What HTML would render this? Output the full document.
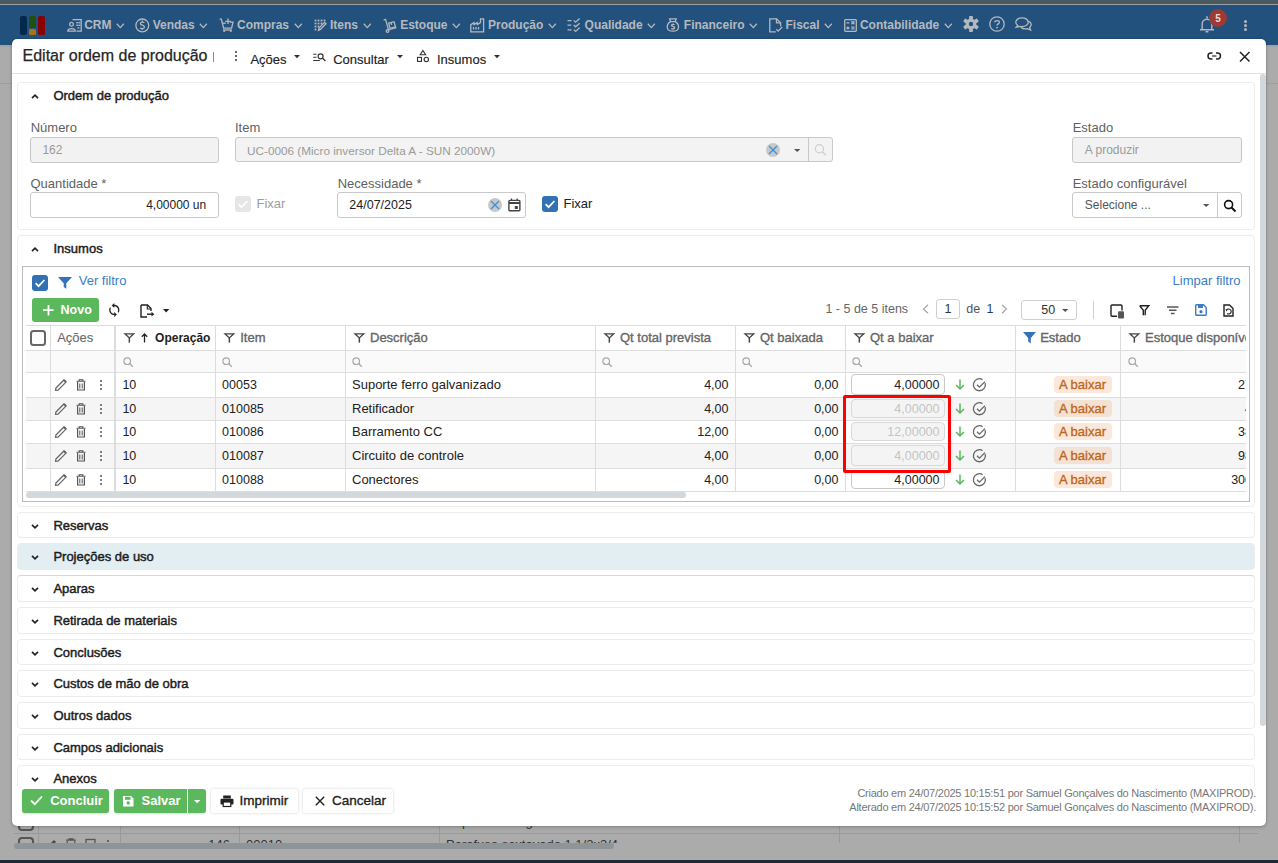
<!DOCTYPE html>
<html><head><meta charset="utf-8"><style>
html,body{margin:0;padding:0;width:1278px;height:863px;overflow:hidden;position:relative;font-family:"Liberation Sans", sans-serif;}
.t{position:absolute;white-space:nowrap;}
svg{overflow:visible}
</style></head><body>
<div style="position:absolute;left:0px;top:0px;width:1278px;height:4px;box-sizing:border-box;background:#4a5860"></div><div style="position:absolute;left:0px;top:4px;width:1278px;height:1px;box-sizing:border-box;background:#9aa1a6"></div><div style="position:absolute;left:0px;top:5px;width:1278px;height:40px;box-sizing:border-box;background:#23517e"></div><div style="position:absolute;left:0px;top:45px;width:1278px;height:815px;box-sizing:border-box;background:#ababab"></div><div style="position:absolute;left:0px;top:45px;width:1278px;height:2px;box-sizing:border-box;background:#a2a2a2"></div><div style="position:absolute;left:0px;top:83px;width:1278px;height:1px;box-sizing:border-box;background:#9e9e9e"></div><div style="position:absolute;left:0px;top:860px;width:1278px;height:3px;box-sizing:border-box;background:#1e2a36"></div><div style="position:absolute;left:20px;top:16px;width:7px;height:19px;box-sizing:border-box;background:#032a4d;border-radius:2px"></div><div style="position:absolute;left:29px;top:16px;width:7px;height:12px;box-sizing:border-box;background:#1f5010;border-radius:2px"></div><div style="position:absolute;left:29px;top:29px;width:7px;height:6px;box-sizing:border-box;background:#a87514;border-radius:1.5px"></div><div style="position:absolute;left:37.5px;top:16px;width:7.5px;height:19px;box-sizing:border-box;background:#8a0000;border-radius:2px"></div><div class="t" style="left:84.2px;top:19.00px;font-size:12px;line-height:12px;color:#b4b9be;font-weight:700;">CRM</div><svg style="position:absolute;left:116.04375px;top:22.5px;" width="9" height="6" viewBox="0 0 9 6"><path d="M0.8 0.8 L4.3 4.6 L7.8 0.8" fill="none" stroke="#b4b9be" stroke-width="1.3"/></svg><div class="t" style="left:152.7px;top:19.00px;font-size:12px;line-height:12px;color:#b4b9be;font-weight:700;">Vendas</div><svg style="position:absolute;left:199.215625px;top:22.5px;" width="9" height="6" viewBox="0 0 9 6"><path d="M0.8 0.8 L4.3 4.6 L7.8 0.8" fill="none" stroke="#b4b9be" stroke-width="1.3"/></svg><div class="t" style="left:237px;top:19.00px;font-size:12px;line-height:12px;color:#b4b9be;font-weight:700;">Compras</div><svg style="position:absolute;left:293.515625px;top:22.5px;" width="9" height="6" viewBox="0 0 9 6"><path d="M0.8 0.8 L4.3 4.6 L7.8 0.8" fill="none" stroke="#b4b9be" stroke-width="1.3"/></svg><div class="t" style="left:330px;top:19.00px;font-size:12px;line-height:12px;color:#b4b9be;font-weight:700;">Itens</div><svg style="position:absolute;left:362.5px;top:22.5px;" width="9" height="6" viewBox="0 0 9 6"><path d="M0.8 0.8 L4.3 4.6 L7.8 0.8" fill="none" stroke="#b4b9be" stroke-width="1.3"/></svg><div class="t" style="left:400.2px;top:19.00px;font-size:12px;line-height:12px;color:#b4b9be;font-weight:700;">Estoque</div><svg style="position:absolute;left:452.028125px;top:22.5px;" width="9" height="6" viewBox="0 0 9 6"><path d="M0.8 0.8 L4.3 4.6 L7.8 0.8" fill="none" stroke="#b4b9be" stroke-width="1.3"/></svg><div class="t" style="left:488px;top:19.00px;font-size:12px;line-height:12px;color:#b4b9be;font-weight:700;">Produção</div><svg style="position:absolute;left:547.828125px;top:22.5px;" width="9" height="6" viewBox="0 0 9 6"><path d="M0.8 0.8 L4.3 4.6 L7.8 0.8" fill="none" stroke="#b4b9be" stroke-width="1.3"/></svg><div class="t" style="left:584.6px;top:19.00px;font-size:12px;line-height:12px;color:#b4b9be;font-weight:700;">Qualidade</div><svg style="position:absolute;left:647.084375px;top:22.5px;" width="9" height="6" viewBox="0 0 9 6"><path d="M0.8 0.8 L4.3 4.6 L7.8 0.8" fill="none" stroke="#b4b9be" stroke-width="1.3"/></svg><div class="t" style="left:683.8px;top:19.00px;font-size:12px;line-height:12px;color:#b4b9be;font-weight:700;">Financeiro</div><svg style="position:absolute;left:748.95625px;top:22.5px;" width="9" height="6" viewBox="0 0 9 6"><path d="M0.8 0.8 L4.3 4.6 L7.8 0.8" fill="none" stroke="#b4b9be" stroke-width="1.3"/></svg><div class="t" style="left:785.5px;top:19.00px;font-size:12px;line-height:12px;color:#b4b9be;font-weight:700;">Fiscal</div><svg style="position:absolute;left:824.0px;top:22.5px;" width="9" height="6" viewBox="0 0 9 6"><path d="M0.8 0.8 L4.3 4.6 L7.8 0.8" fill="none" stroke="#b4b9be" stroke-width="1.3"/></svg><div class="t" style="left:859.9px;top:19.00px;font-size:12px;line-height:12px;color:#b4b9be;font-weight:700;">Contabilidade</div><svg style="position:absolute;left:943.7125px;top:22.5px;" width="9" height="6" viewBox="0 0 9 6"><path d="M0.8 0.8 L4.3 4.6 L7.8 0.8" fill="none" stroke="#b4b9be" stroke-width="1.3"/></svg><svg style="position:absolute;left:66.5px;top:18.5px;" width="15" height="13" viewBox="0 0 15 13"><circle cx="4.5" cy="5.3" r="1.9" fill="none" stroke="#b4b9be" stroke-width="1.3"/><path d="M0.8 12.2 a3.7 2.6 0 0 1 7.4 0 z" fill="none" stroke="#b4b9be" stroke-width="1.3"/><path d="M5.5 0.7 H14.2 V12.2 H9.5" fill="none" stroke="#b4b9be" stroke-width="1.3"/><rect x="9.3" y="3" width="1.8" height="1.4" fill="#b4b9be"/><rect x="11.5" y="3" width="1.8" height="1.4" fill="#b4b9be"/><rect x="9.3" y="5.6" width="1.8" height="1.4" fill="#b4b9be"/><rect x="11.5" y="5.6" width="1.8" height="1.4" fill="#b4b9be"/><rect x="10.5" y="8.2" width="1.8" height="1.4" fill="#b4b9be"/></svg><svg style="position:absolute;left:134.5px;top:17.5px;" width="15" height="15" viewBox="0 0 15 15"><circle cx="7.3" cy="7.4" r="6.4" fill="none" stroke="#b4b9be" stroke-width="1.3"/><path d="M9.3 4.8 C8.8 3.8 5.3 3.6 5.4 5.6 C5.5 7.4 9.4 6.8 9.4 9 C9.4 11 5.8 11 5.2 9.8 M7.3 2.6 V3.8 M7.3 10.8 V12" fill="none" stroke="#b4b9be" stroke-width="1.3" stroke-width="1.1"/></svg><svg style="position:absolute;left:219px;top:17.5px;" width="15" height="15" viewBox="0 0 15 15"><path d="M0.6 1.2 H2.3 L4.6 10.2 H12.6 L14 4.2 H10.8" fill="none" stroke="#b4b9be" stroke-width="1.3"/><path d="M3.3 5.2 H6.8" fill="none" stroke="#b4b9be" stroke-width="1.3"/><path d="M9 0.6 V6 M6.3 3.3 H11.7" fill="none" stroke="#b4b9be" stroke-width="1.3"/><circle cx="5.2" cy="13" r="1" fill="#b4b9be"/><circle cx="11.8" cy="13" r="1" fill="#b4b9be"/><path d="M4 12 H13" fill="none" stroke="#b4b9be" stroke-width="1.3" stroke-width="0.9"/></svg><svg style="position:absolute;left:314px;top:19px;" width="13" height="13" viewBox="0 0 13 13"><rect x="0.6" y="0.6" width="1.8" height="1.8" fill="#b4b9be"/><rect x="3.6" y="0.6" width="1.8" height="1.8" fill="#b4b9be"/><rect x="6.6" y="0.6" width="1.8" height="1.8" fill="#b4b9be"/><rect x="9.6" y="0.6" width="1.8" height="1.8" fill="#b4b9be"/><rect x="0.6" y="3.6" width="1.8" height="1.8" fill="#b4b9be"/><rect x="3.6" y="3.6" width="1.8" height="1.8" fill="#b4b9be"/><rect x="6.6" y="3.6" width="1.8" height="1.8" fill="#b4b9be"/><rect x="0.6" y="6.6" width="1.8" height="1.8" fill="#b4b9be"/><rect x="3.6" y="6.6" width="1.8" height="1.8" fill="#b4b9be"/><rect x="0.6" y="9.6" width="1.8" height="1.8" fill="#b4b9be"/><path d="M4.5 11.3 L5 9 L10.6 3.4 L12 4.8 L6.4 10.4 z" fill="none" stroke="#b4b9be" stroke-width="1.3" stroke-width="1.1"/></svg><svg style="position:absolute;left:383px;top:18.5px;" width="14" height="14" viewBox="0 0 14 14"><path d="M0.6 0.8 L2.6 0.4 L5.5 10.8 L13.4 8.6" fill="none" stroke="#b4b9be" stroke-width="1.3"/><circle cx="4.5" cy="12" r="1.3" fill="none" stroke="#b4b9be" stroke-width="1.3"/><path d="M5.6 4.2 L11 2.7 L12.5 7.8 L7 9.3 z" fill="none" stroke="#b4b9be" stroke-width="1.3" stroke-width="1.1"/><path d="M8 3.5 L8.6 5.8" fill="none" stroke="#b4b9be" stroke-width="1.3" stroke-width="1"/></svg><svg style="position:absolute;left:469.5px;top:17.5px;" width="15" height="15" viewBox="0 0 15 15"><path d="M0.8 13.8 V6.6 L4 4.6 V6.6 L7.3 4.6 V6.6 L10.5 4.6 V0.8 H13.6 V13.8 z" fill="none" stroke="#b4b9be" stroke-width="1.3" stroke-width="1.4"/><path d="M3.5 9 V11.5 M6 9 V11.5 M8.5 9 V11.5" fill="none" stroke="#b4b9be" stroke-width="1.3" stroke-width="1.2"/></svg><svg style="position:absolute;left:566.5px;top:18.5px;" width="15" height="13" viewBox="0 0 15 13"><path d="M0.5 1.6 H4.5 M0.5 6.2 H4.3 M0.5 10.8 H4.5" fill="none" stroke="#b4b9be" stroke-width="1.3"/><path d="M6.8 1.4 L8.6 3.2 L12.6 -0.4 M6.8 6 L8.6 7.8 L12.6 4.2 M6.8 10.6 L8.6 12.4 L12.6 8.8" fill="none" stroke="#b4b9be" stroke-width="1.3"/></svg><svg style="position:absolute;left:666px;top:18px;" width="14" height="14" viewBox="0 0 14 14"><path d="M4.6 3.6 C0 6.4 -0.4 13.2 6.9 13.2 C14.2 13.2 13.8 6.4 9.2 3.6 z" fill="none" stroke="#b4b9be" stroke-width="1.3"/><path d="M4.6 3.6 L3.6 0.8 H10.2 L9.2 3.6" fill="none" stroke="#b4b9be" stroke-width="1.3"/><path d="M8.6 6.8 C8.2 6.1 5.4 6 5.5 7.4 C5.6 8.6 8.7 8.3 8.7 9.8 C8.7 11.2 5.8 11.1 5.3 10.3 M7 5.6 V6.2 M7 11.1 V11.8" fill="none" stroke="#b4b9be" stroke-width="1.3" stroke-width="1"/></svg><svg style="position:absolute;left:769px;top:17.5px;" width="14" height="15" viewBox="0 0 14 15"><path d="M6.8 13.8 H0.8 V0.8 H7.6 L11.6 4.8 V8.2" fill="none" stroke="#b4b9be" stroke-width="1.3" stroke-width="1.4"/><path d="M7.5 0.8 V4.8 H11.6" fill="none" stroke="#b4b9be" stroke-width="1.3" stroke-width="1"/><path d="M7.3 11.3 L9.1 13.1 L13.2 9" fill="none" stroke="#b4b9be" stroke-width="1.3" stroke-width="1.2"/></svg><svg style="position:absolute;left:843.5px;top:18.5px;" width="13" height="13" viewBox="0 0 13 13"><rect x="0.7" y="0.7" width="11.6" height="11.6" rx="0.8" fill="none" stroke="#b4b9be" stroke-width="1.3" stroke-width="1.3"/><path d="M2.4 3.8 H5.4 M7.4 2.2 L10.4 5.2 M10.4 2.2 L7.4 5.2 M2.3 9 H5.5 M3.9 7.4 V10.6 M7.3 8.2 H10.5 M7.3 9.9 H10.5" fill="none" stroke="#b4b9be" stroke-width="1.3" stroke-width="1.2"/></svg><svg style="position:absolute;left:963px;top:16px;" width="16" height="16" viewBox="0 0 16 16"><rect x="-1.9" y="-8" width="3.8" height="4" rx="0.8" fill="#b4b9be" transform="translate(8 8) rotate(0)"/><rect x="-1.9" y="-8" width="3.8" height="4" rx="0.8" fill="#b4b9be" transform="translate(8 8) rotate(60)"/><rect x="-1.9" y="-8" width="3.8" height="4" rx="0.8" fill="#b4b9be" transform="translate(8 8) rotate(120)"/><rect x="-1.9" y="-8" width="3.8" height="4" rx="0.8" fill="#b4b9be" transform="translate(8 8) rotate(180)"/><rect x="-1.9" y="-8" width="3.8" height="4" rx="0.8" fill="#b4b9be" transform="translate(8 8) rotate(240)"/><rect x="-1.9" y="-8" width="3.8" height="4" rx="0.8" fill="#b4b9be" transform="translate(8 8) rotate(300)"/><circle cx="8" cy="8" r="5.4" fill="#b4b9be"/><circle cx="8" cy="8" r="2.2" fill="#23517e"/></svg><svg style="position:absolute;left:989px;top:16px;" width="16" height="16" viewBox="0 0 16 16"><circle cx="8" cy="8" r="7.2" fill="none" stroke="#b4b9be" stroke-width="1.3" stroke-width="1.4"/><path d="M5.6 6.2 C5.6 4.2 10.4 4.2 10.4 6.3 C10.4 7.8 8 8 8 9.6" fill="none" stroke="#b4b9be" stroke-width="1.3" stroke-width="1.4"/><circle cx="8" cy="11.6" r="0.9" fill="#b4b9be"/></svg><svg style="position:absolute;left:1014.5px;top:16.5px;" width="17" height="15" viewBox="0 0 17 15"><path d="M7 0.8 C3.4 0.8 0.8 2.8 0.8 5.2 C0.8 6.6 1.6 7.6 2.7 8.3 L1.2 10.2 L5 9.3 C5.7 9.5 6.3 9.6 7 9.6 C10.6 9.6 13.2 7.6 13.2 5.2 C13.2 2.8 10.6 0.8 7 0.8 z" fill="none" stroke="#b4b9be" stroke-width="1.3" stroke-width="1.1"/><path d="M13.5 4.2 C15.2 5 16.2 6.2 16.2 7.6 C16.2 8.8 15.5 9.8 14.6 10.5 L15.6 13 L12.4 11.6 C11.8 11.8 11.1 11.9 10.4 11.9 C8.6 11.9 7 11.3 6 10.2" fill="none" stroke="#b4b9be" stroke-width="1.3" stroke-width="1.1"/></svg><svg style="position:absolute;left:1199px;top:15px;" width="16" height="19" viewBox="0 0 16 19"><path d="M3.2 14.5 V9 a4.8 4.8 0 0 1 9.6 0 V14.5 M1 14.8 h14" fill="none" stroke="#b4b9be" stroke-width="1.4"/><path d="M8 1.2 V3.6 M6.6 16.8 h2.8" stroke="#b4b9be" stroke-width="1.5"/></svg><div style="position:absolute;left:1209px;top:9px;width:18px;height:18px;border-radius:50%;background:#9e3a34"></div><div class="t" style="left:918px;width:600px;text-align:center;top:14.00px;font-size:10px;line-height:10px;color:#e8d8d8;font-weight:700;">5</div><div style="position:absolute;left:1243.8px;top:19.8px;width:3px;height:3px;box-sizing:border-box;background:#b4b9be;border-radius:50%"></div><div style="position:absolute;left:1243.8px;top:23.8px;width:3px;height:3px;box-sizing:border-box;background:#b4b9be;border-radius:50%"></div><div style="position:absolute;left:1243.8px;top:27.8px;width:3px;height:3px;box-sizing:border-box;background:#b4b9be;border-radius:50%"></div><div style="position:absolute;left:14px;top:833px;width:1244px;height:1px;box-sizing:border-box;background:#999"></div><div style="position:absolute;left:38px;top:826px;width:1px;height:17px;box-sizing:border-box;background:#999"></div><div style="position:absolute;left:120px;top:826px;width:1px;height:17px;box-sizing:border-box;background:#999"></div><div style="position:absolute;left:239px;top:826px;width:1px;height:17px;box-sizing:border-box;background:#999"></div><div style="position:absolute;left:439px;top:826px;width:1px;height:17px;box-sizing:border-box;background:#999"></div><div style="position:absolute;left:839px;top:826px;width:1px;height:17px;box-sizing:border-box;background:#999"></div><div style="position:absolute;left:1239px;top:826px;width:1px;height:17px;box-sizing:border-box;background:#999"></div><div style="position:absolute;left:18px;top:826px;width:16px;height:5px;box-sizing:border-box;border:2px solid #555;border-top:none;border-radius:0 0 4px 4px"></div><div style="position:absolute;left:18px;top:837px;width:16px;height:10px;box-sizing:border-box;border:2px solid #555;border-bottom:none;border-radius:4px 4px 0 0"></div><div style="position:absolute;left:0px;top:826px;width:1278px;height:17px;overflow:hidden;"><svg style="position:absolute;left:45px;top:-12px" width="70" height="12" viewBox="0 0 70 12"><path d="M2 11 L2.6 8.4 L9 2 L11 4 L4.6 10.4 z" fill="#4a4a4a"/><path d="M21 2.2 H31 M24 2.2 V0.8 H28 V2.2 M22.2 3 V11 H29.8 V3" fill="none" stroke="#555" stroke-width="1.2"/><rect x="41" y="1.5" width="9" height="9" fill="none" stroke="#555" stroke-width="1.3"/><circle cx="63" cy="3" r="1.1" fill="#555"/><circle cx="63" cy="7" r="1.1" fill="#555"/><circle cx="63" cy="11" r="1.1" fill="#555"/></svg><svg style="position:absolute;left:45px;top:12px" width="70" height="12" viewBox="0 0 70 12"><path d="M2 11 L2.6 8.4 L9 2 L11 4 L4.6 10.4 z" fill="#4a4a4a"/><path d="M21 2.2 H31 M24 2.2 V0.8 H28 V2.2 M22.2 3 V11 H29.8 V3" fill="none" stroke="#555" stroke-width="1.2"/><rect x="41" y="1.5" width="9" height="9" fill="none" stroke="#555" stroke-width="1.3"/><circle cx="63" cy="3" r="1.1" fill="#555"/><circle cx="63" cy="7" r="1.1" fill="#555"/><circle cx="63" cy="11" r="1.1" fill="#555"/></svg><div class="t" style="left:-370px;width:600px;text-align:right;top:12px;font-size:13px;line-height:13px;color:#333">146</div><div class="t" style="left:246px;top:12px;font-size:13px;line-height:13px;color:#333">00010</div><div class="t" style="left:446px;top:12px;font-size:13px;line-height:13px;color:#333">Parafuso sextavado 1 1/2x3/4</div><div class="t" style="left:446px;top:-11px;font-size:13px;line-height:13px;color:#333">Suporte ferro galvanizado</div></div><div style="position:absolute;left:14px;top:843px;width:600px;height:6px;box-sizing:border-box;background:#8e9498;border-radius:3px"></div><div id="modal" style="position:absolute;left:12px;top:39px;width:1254px;height:787px;background:#fff;border-radius:5px;overflow:hidden;box-shadow:0 0 2px rgba(0,0,0,0.35),0 2px 4px rgba(0,0,0,0.12)"></div><div class="t" style="left:22.5px;top:48.00px;font-size:16px;line-height:16px;color:#262626;font-weight:400;-webkit-text-stroke:0.25px currentColor">Editar ordem de produção</div><div style="position:absolute;left:213px;top:52px;width:1px;height:10px;box-sizing:border-box;background:#8a8a8a"></div><div style="position:absolute;left:235px;top:51px;width:2.4px;height:2.4px;box-sizing:border-box;background:#333;border-radius:50%"></div><div style="position:absolute;left:235px;top:55px;width:2.4px;height:2.4px;box-sizing:border-box;background:#333;border-radius:50%"></div><div style="position:absolute;left:235px;top:59px;width:2.4px;height:2.4px;box-sizing:border-box;background:#333;border-radius:50%"></div><div class="t" style="left:250.4px;top:53.00px;font-size:13px;line-height:13px;color:#222;font-weight:400;-webkit-text-stroke:0.15px currentColor">Ações</div><svg style="position:absolute;left:294px;top:55px;" width="6" height="3.2" viewBox="0 0 6 3.2"><path d="M0 0 L6 0 L3.0 3.2 z" fill="#333"/></svg><svg style="position:absolute;left:312.5px;top:52.5px;" width="15" height="10" viewBox="0 0 15 10"><path d="M0.3 1.3h3.2M0.3 4.3h3.2M0.3 7.5h6.5" stroke="#333" stroke-width="1.1" fill="none"/><circle cx="7.6" cy="3.3" r="2.5" fill="none" stroke="#333" stroke-width="1.2"/><path d="M9.4 5.1l3 2.8" stroke="#333" stroke-width="1.4"/></svg><div class="t" style="left:333.2px;top:53.00px;font-size:13px;line-height:13px;color:#222;font-weight:400;-webkit-text-stroke:0.15px currentColor">Consultar</div><svg style="position:absolute;left:396.7px;top:55px;" width="6" height="3.2" viewBox="0 0 6 3.2"><path d="M0 0 L6 0 L3.0 3.2 z" fill="#333"/></svg><svg style="position:absolute;left:416px;top:49px;" width="14" height="14" viewBox="0 0 14 14"><path d="M6.9 1.5 L9.6 5.8 L4.2 5.8 z" fill="none" stroke="#333" stroke-width="1.1"/><rect x="1.5" y="8.4" width="4" height="4" fill="none" stroke="#333" stroke-width="1.1"/><circle cx="10.3" cy="10.4" r="2.2" fill="none" stroke="#333" stroke-width="1.1"/></svg><div class="t" style="left:437px;top:53.00px;font-size:13px;line-height:13px;color:#222;font-weight:400;-webkit-text-stroke:0.15px currentColor">Insumos</div><svg style="position:absolute;left:494px;top:55.3px;" width="6" height="3.2" viewBox="0 0 6 3.2"><path d="M0 0 L6 0 L3.0 3.2 z" fill="#333"/></svg><svg style="position:absolute;left:1207px;top:52px;" width="16" height="8" viewBox="0 0 16 8"><path d="M5.5 1 H4 a3 3 0 0 0 0 6 H5.5 M9 1 H10.5 a3 3 0 0 1 0 6 H9" fill="none" stroke="#222" stroke-width="1.5"/><path d="M5 4 H9.5" stroke="#555" stroke-width="1.5"/></svg><svg style="position:absolute;left:1239px;top:51px;" width="12" height="12" viewBox="0 0 12 12"><path d="M1 1 L10.5 10.5 M10.5 1 L1 10.5" stroke="#222" stroke-width="1.5"/></svg><div style="position:absolute;left:12px;top:73px;width:1254px;height:1px;box-sizing:border-box;background:#e2e2e2"></div><div style="position:absolute;left:1260px;top:74px;width:6px;height:652px;box-sizing:border-box;background:#d3d8dd;border-radius:3px"></div><div style="position:absolute;left:12px;top:74px;width:1248px;height:712px;overflow:hidden;"><div style="position:absolute;left:5.199999999999999px;top:8px;width:1238px;height:148px;box-sizing:border-box;border:1px solid #ececec;border-radius:4px"></div><svg style="position:absolute;left:19px;top:19.5px;" width="8" height="5" viewBox="0 0 8 5"><path d="M1 4.2 L4 1.2 L7 4.2" fill="none" stroke="#222" stroke-width="1.7"/></svg><div class="t" style="left:41.4px;top:15.00px;font-size:13px;line-height:13px;color:#1d1d1d;font-weight:400;-webkit-text-stroke:0.45px currentColor">Ordem de produção</div><div class="t" style="left:18.7px;top:47.00px;font-size:13px;line-height:13px;color:#5f5f5f;font-weight:400;">Número</div><div style="position:absolute;left:18.3px;top:63px;width:188.5px;height:25.7px;box-sizing:border-box;background:#f2f2f2;border:1px solid #c8c8c8;border-radius:3px"></div><div class="t" style="left:30.4px;top:70.00px;font-size:12px;line-height:12px;color:#9a9a9a;font-weight:400;">162</div><div class="t" style="left:223px;top:47.00px;font-size:13px;line-height:13px;color:#5f5f5f;font-weight:400;">Item</div><div style="position:absolute;left:223px;top:63.19999999999999px;width:597.5px;height:25.3px;box-sizing:border-box;background:#f3f3f3;border:1px solid #c8c8c8;border-radius:3px"></div><div class="t" style="left:235px;top:71.00px;font-size:11.75px;line-height:11.75px;color:#9a9a9a;font-weight:400;">UC-0006 (Micro inversor Delta A - SUN 2000W)</div><div style="position:absolute;left:796px;top:63.19999999999999px;width:1px;height:25.3px;box-sizing:border-box;background:#c8c8c8"></div><svg style="position:absolute;left:753.9px;top:68.9px;" width="14" height="14" viewBox="0 0 14 14"><circle cx="7" cy="7" r="7" fill="#c8c8c8"/><path d="M3 3 L11 11 M11 3 L3 11" stroke="#3d8fd8" stroke-width="1.3"/></svg><svg style="position:absolute;left:781.7px;top:75px;" width="6.4" height="3.1" viewBox="0 0 6.4 3.1"><path d="M0 0 L6.4 0 L3.2 3.1 z" fill="#555"/></svg><svg style="position:absolute;left:801px;top:69px;" width="14" height="14" viewBox="0 0 14 14"><circle cx="6.4" cy="5.7" r="4.1" fill="none" stroke="#cfcfcf" stroke-width="1.2"/><path d="M9.3 8.7 L12.8 12.2" stroke="#cfcfcf" stroke-width="1.4"/></svg><div class="t" style="left:1060.7px;top:47.00px;font-size:13px;line-height:13px;color:#5f5f5f;font-weight:400;">Estado</div><div style="position:absolute;left:1060.3px;top:63.30000000000001px;width:169.5px;height:25.3px;box-sizing:border-box;background:#f2f2f2;border:1px solid #c8c8c8;border-radius:3px"></div><div class="t" style="left:1072.8px;top:70.00px;font-size:12px;line-height:12px;color:#9a9a9a;font-weight:400;">A produzir</div><div class="t" style="left:18.5px;top:103.00px;font-size:13px;line-height:13px;color:#5f5f5f;font-weight:400;">Quantidade *</div><div style="position:absolute;left:18.3px;top:118px;width:188.5px;height:26px;box-sizing:border-box;background:#fff;border:1px solid #c9c9c9;border-radius:3px"></div><div class="t" style="left:-405.8px;width:600px;text-align:right;top:125.00px;font-size:12px;line-height:12px;color:#212121;font-weight:400;">4,00000 un</div><div style="position:absolute;left:223.1px;top:122.1px;width:15.7px;height:15.5px;box-sizing:border-box;background:#e6e6e6;border-radius:3px"></div><svg style="position:absolute;left:223.1px;top:122.1px;" width="16" height="16" viewBox="0 0 16 16"><path d="M3.6 8.2 L6.6 11.2 L12.4 5" fill="none" stroke="#fff" stroke-width="1.6"/></svg><div class="t" style="left:244.5px;top:123.00px;font-size:13px;line-height:13px;color:#9d9d9d;font-weight:400;">Fixar</div><div class="t" style="left:325.7px;top:103.00px;font-size:13px;line-height:13px;color:#5f5f5f;font-weight:400;">Necessidade *</div><div style="position:absolute;left:325.3px;top:118px;width:188.7px;height:26px;box-sizing:border-box;background:#fff;border:1px solid #c9c9c9;border-radius:3px"></div><div class="t" style="left:337.3px;top:125.00px;font-size:12.5px;line-height:12.5px;color:#212121;font-weight:400;">24/07/2025</div><svg style="position:absolute;left:475.8px;top:123.6px;" width="14" height="14" viewBox="0 0 14 14"><circle cx="7" cy="7" r="7" fill="#c8c8c8"/><path d="M3 3 L11 11 M11 3 L3 11" stroke="#3d8fd8" stroke-width="1.3"/></svg><svg style="position:absolute;left:495.5px;top:123.5px;" width="13" height="14" viewBox="0 0 13 14"><rect x="0.9" y="2.4" width="11" height="10.4" rx="1" fill="none" stroke="#444" stroke-width="1.4"/><path d="M0.9 5 H12" stroke="#444" stroke-width="2"/><path d="M3.5 0.5 V3 M9.2 0.5 V3" stroke="#444" stroke-width="1.3"/><rect x="6.8" y="8" width="3" height="3" fill="#444"/></svg><div style="position:absolute;left:530.2px;top:121.80000000000001px;width:15.8px;height:16px;box-sizing:border-box;background:#3371b5;border-radius:3px"></div><svg style="position:absolute;left:530.2px;top:121.80000000000001px;" width="16" height="16" viewBox="0 0 16 16"><path d="M3.6 8.2 L6.6 11.2 L12.4 5" fill="none" stroke="#fff" stroke-width="1.7"/></svg><div class="t" style="left:551.5px;top:123.00px;font-size:13px;line-height:13px;color:#212121;font-weight:400;">Fixar</div><div class="t" style="left:1060.7px;top:103.00px;font-size:13px;line-height:13px;color:#5f5f5f;font-weight:400;">Estado configurável</div><div style="position:absolute;left:1060.3px;top:118px;width:169.5px;height:26px;box-sizing:border-box;background:#fff;border:1px solid #c9c9c9;border-radius:3px"></div><div style="position:absolute;left:1205.4px;top:118px;width:1px;height:26px;box-sizing:border-box;background:#c9c9c9"></div><div class="t" style="left:1072.8px;top:125.00px;font-size:12px;line-height:12px;color:#555;font-weight:400;">Selecione ...</div><svg style="position:absolute;left:1191px;top:130px;" width="6.4" height="3.1" viewBox="0 0 6.4 3.1"><path d="M0 0 L6.4 0 L3.2 3.1 z" fill="#555"/></svg><svg style="position:absolute;left:1211px;top:125px;" width="14" height="14" viewBox="0 0 14 14"><circle cx="5.6" cy="5.6" r="4" fill="none" stroke="#111" stroke-width="1.6"/><path d="M8.5 8.5 L12.5 12.5" stroke="#111" stroke-width="2"/></svg><div style="position:absolute;left:5.199999999999999px;top:161px;width:1238px;height:272px;box-sizing:border-box;border:1px solid #ececec;border-radius:4px"></div><svg style="position:absolute;left:19px;top:172.5px;" width="8" height="5" viewBox="0 0 8 5"><path d="M1 4.2 L4 1.2 L7 4.2" fill="none" stroke="#222" stroke-width="1.7"/></svg><div class="t" style="left:41.5px;top:168.00px;font-size:13px;line-height:13px;color:#1d1d1d;font-weight:400;-webkit-text-stroke:0.45px currentColor">Insumos</div><div style="position:absolute;left:10.2px;top:192.2px;width:1227.6px;height:235.6px;box-sizing:border-box;border:1px solid #bdbdbd"></div><div style="position:absolute;left:20.1px;top:201px;width:15.8px;height:15.6px;box-sizing:border-box;background:#3371b5;border-radius:3px"></div><svg style="position:absolute;left:20.1px;top:201px;" width="16" height="16" viewBox="0 0 16 16"><path d="M3.6 8.2 L6.6 11.2 L12.4 5" fill="none" stroke="#fff" stroke-width="1.7"/></svg><svg style="position:absolute;left:46px;top:202.8px;" width="14" height="12" viewBox="0 0 14 12"><path d="M0 0 H14 L8.3 6.3 V11.8 L5.7 10 V6.3 z" fill="#3573b8"/></svg><div class="t" style="left:66.75px;top:200.00px;font-size:13px;line-height:13px;color:#3b7dc4;font-weight:400;">Ver filtro</div><div class="t" style="left:628.5px;width:600px;text-align:right;top:200.00px;font-size:13px;line-height:13px;color:#3b7dc4;font-weight:400;">Limpar filtro</div><div style="position:absolute;left:19.9px;top:224.10000000000002px;width:66.9px;height:23.5px;box-sizing:border-box;background:#5cb85c;border-radius:3px"></div><svg style="position:absolute;left:31px;top:231px;" width="11" height="11" viewBox="0 0 11 11"><path d="M5.5 0 V10.5 M0 5.2 H10.5" stroke="#fff" stroke-width="1.8"/></svg><div class="t" style="left:48.6px;top:230.00px;font-size:12.5px;line-height:12.5px;color:#fff;font-weight:700;">Novo</div><svg style="position:absolute;left:97.3px;top:229.3px;" width="14" height="15" viewBox="0 0 14 15"><path transform="translate(-2.4 -0.7) scale(0.64)" d="M12 4V1L8 5l4 4V6c3.31 0 6 2.69 6 6 0 1.01-.25 1.97-.7 2.8l1.46 1.46C19.54 15.03 20 13.57 20 12c0-4.42-3.58-8-8-8zm0 14c-3.31 0-6-2.69-6-6 0-1.01.25-1.97.7-2.8L5.24 7.74C4.46 8.97 4 10.43 4 12c0 4.42 3.58 8 8 8v3l4-4-4-4v3z" fill="#222"/></svg><svg style="position:absolute;left:128px;top:229.5px;" width="15" height="14" viewBox="0 0 15 14"><path d="M1 1 H7.5 L11 4.5 V7 M1 1 V13 H7" fill="none" stroke="#222" stroke-width="1.4"/><path d="M7.3 1 V5 H11" fill="none" stroke="#222" stroke-width="1.1"/><path d="M7 10.2 H12.5" stroke="#222" stroke-width="1.4"/><path d="M11.5 7.8 L14.3 10.2 L11.5 12.6z" fill="#222"/></svg><svg style="position:absolute;left:151.1px;top:234.8px;" width="6.3" height="3.5" viewBox="0 0 6.3 3.5"><path d="M0 0 L6.3 0 L3.15 3.5 z" fill="#222"/></svg><div class="t" style="left:296.1px;width:600px;text-align:right;top:229.00px;font-size:12.5px;line-height:12.5px;color:#666;font-weight:400;">1 - 5 de 5 itens</div><svg style="position:absolute;left:910px;top:230px;" width="7" height="10" viewBox="0 0 7 10"><path d="M6 0.8 L1.5 5 L6 9.2" fill="none" stroke="#aaa" stroke-width="1.3"/></svg><div style="position:absolute;left:924.2px;top:225.39999999999998px;width:23.4px;height:19.3px;box-sizing:border-box;background:#fff;border:1px solid #cfcfcf;border-radius:3px"></div><div class="t" style="left:635.9px;width:600px;text-align:center;top:229.00px;font-size:12.5px;line-height:12.5px;color:#333;font-weight:400;">1</div><div class="t" style="left:954.3px;top:229.00px;font-size:12.5px;line-height:12.5px;color:#555;font-weight:400;">de</div><div class="t" style="left:974.4px;top:229.00px;font-size:12.5px;line-height:12.5px;color:#2a3f55;font-weight:400;">1</div><svg style="position:absolute;left:988.5px;top:230px;" width="7" height="10" viewBox="0 0 7 10"><path d="M1 0.8 L5.5 5 L1 9.2" fill="none" stroke="#aaa" stroke-width="1.3"/></svg><div style="position:absolute;left:1009px;top:226.3px;width:56px;height:19.3px;box-sizing:border-box;background:#fff;border:1px solid #cfcfcf;border-radius:3px"></div><div class="t" style="left:1029.3px;top:230.00px;font-size:12.5px;line-height:12.5px;color:#333;font-weight:400;">50</div><svg style="position:absolute;left:1050.2px;top:235px;" width="6.4" height="3.1" viewBox="0 0 6.4 3.1"><path d="M0 0 L6.4 0 L3.2 3.1 z" fill="#555"/></svg><div style="position:absolute;left:1081px;top:227px;width:1px;height:18px;box-sizing:border-box;background:#cfcfcf"></div><svg style="position:absolute;left:1097.5px;top:229.5px;" width="15" height="15" viewBox="0 0 15 15"><path d="M7 12.2 H2 a1 1 0 0 1 -1 -1 V2 a1 1 0 0 1 1 -1 H11 a1 1 0 0 1 1 1 V6.5" fill="none" stroke="#222" stroke-width="1.4"/><rect x="8" y="7.2" width="6" height="7.3" rx="1.2" fill="#555"/></svg><svg style="position:absolute;left:1127px;top:231px;" width="11" height="11" viewBox="0 0 11 11"><path d="M0.7 0.7 H9.8 L6.2 5.3 V10.3 M0.7 0.7 L4.3 5.3 V10.3" fill="none" stroke="#222" stroke-width="1.4"/></svg><svg style="position:absolute;left:1154.5px;top:231.5px;" width="12" height="9" viewBox="0 0 12 9"><path d="M0 1 H11.5 M2 4.2 H9.5 M4 7.5 H7.5" stroke="#555" stroke-width="1.5"/></svg><svg style="position:absolute;left:1182.5px;top:230px;" width="12" height="12" viewBox="0 0 12 12"><path d="M1.5 0.8 H8.5 L11.2 3.5 V10.5 a0.8 0.8 0 0 1 -0.8 0.8 H1.5 a0.8 0.8 0 0 1 -0.8 -0.8 V1.6 a0.8 0.8 0 0 1 0.8 -0.8z" fill="none" stroke="#3b7dc4" stroke-width="1.4"/><rect x="3" y="1" width="5" height="3" fill="#3b7dc4"/><circle cx="6" cy="7.7" r="1.6" fill="#3b7dc4"/></svg><svg style="position:absolute;left:1211px;top:229.5px;" width="11" height="13" viewBox="0 0 11 13"><path d="M1 1 H6.5 L10 4.5 V12 H1 z" fill="none" stroke="#222" stroke-width="1.4"/><path d="M3.5 6.3 a2.5 2.5 0 1 1 0.7 3.2" fill="none" stroke="#222" stroke-width="1.1"/><path d="M2.5 5.2 L4.7 5.5 L3.3 7.5z" fill="#222"/></svg><div style="position:absolute;left:14px;top:251px;width:1220px;height:177px;overflow:hidden;"><div style="position:absolute;left:0px;top:0px;width:1400px;height:1px;box-sizing:border-box;background:#dddddd"></div><div style="position:absolute;left:0px;top:25px;width:1400px;height:1px;box-sizing:border-box;background:#dddddd"></div><div style="position:absolute;left:0px;top:26px;width:1400px;height:21px;box-sizing:border-box;background:#fafafa"></div><div style="position:absolute;left:0px;top:47px;width:1400px;height:1px;box-sizing:border-box;background:#dddddd"></div><div style="position:absolute;left:0px;top:72px;width:1400px;height:1px;box-sizing:border-box;background:#dddddd"></div><div style="position:absolute;left:0px;top:73px;width:1400px;height:22px;box-sizing:border-box;background:#f5f5f5"></div><div style="position:absolute;left:0px;top:95px;width:1400px;height:1px;box-sizing:border-box;background:#dddddd"></div><div style="position:absolute;left:0px;top:118px;width:1400px;height:1px;box-sizing:border-box;background:#dddddd"></div><div style="position:absolute;left:0px;top:119px;width:1400px;height:24px;box-sizing:border-box;background:#f5f5f5"></div><div style="position:absolute;left:0px;top:143px;width:1400px;height:1px;box-sizing:border-box;background:#dddddd"></div><div style="position:absolute;left:0px;top:166px;width:1400px;height:1px;box-sizing:border-box;background:#dddddd"></div><div style="position:absolute;left:24px;top:0px;width:1px;height:166px;box-sizing:border-box;background:#dddddd"></div><div style="position:absolute;left:89px;top:0px;width:1px;height:166px;box-sizing:border-box;background:#dddddd"></div><div style="position:absolute;left:189px;top:0px;width:1px;height:166px;box-sizing:border-box;background:#dddddd"></div><div style="position:absolute;left:319px;top:0px;width:1px;height:166px;box-sizing:border-box;background:#dddddd"></div><div style="position:absolute;left:569px;top:0px;width:1px;height:166px;box-sizing:border-box;background:#dddddd"></div><div style="position:absolute;left:709px;top:0px;width:1px;height:166px;box-sizing:border-box;background:#dddddd"></div><div style="position:absolute;left:819px;top:0px;width:1px;height:166px;box-sizing:border-box;background:#dddddd"></div><div style="position:absolute;left:989px;top:0px;width:1px;height:166px;box-sizing:border-box;background:#dddddd"></div><div style="position:absolute;left:1094px;top:0px;width:1px;height:166px;box-sizing:border-box;background:#dddddd"></div><div style="position:absolute;left:88px;top:0px;width:1px;height:166px;box-sizing:border-box;background:#dddddd"></div><div style="position:absolute;left:4.100000000000001px;top:5.199999999999989px;width:15.7px;height:15.6px;box-sizing:border-box;border:2px solid #666;border-radius:3.5px"></div><div class="t" style="left:31.200000000000003px;top:6.00px;font-size:13px;line-height:13px;color:#6a6a6a;font-weight:400;-webkit-text-stroke:0.1px currentColor">Ações</div><svg style="position:absolute;left:98.3px;top:7.600000000000023px;" width="11" height="10" viewBox="0 0 11 10"><path d="M0.9 0.8 H9.8 L5.35 5 z" fill="none" stroke="#444" stroke-width="1.25" stroke-linejoin="miter"/><path d="M5.35 5 V9.6" stroke="#444" stroke-width="1.5"/></svg><svg style="position:absolute;left:114.5px;top:7.5px;" width="7" height="10" viewBox="0 0 7 10"><path d="M3.5 1 V9.5 M0.8 3.8 L3.5 1 L6.2 3.8" fill="none" stroke="#222" stroke-width="1.3"/></svg><div class="t" style="left:129.1px;top:7.00px;font-size:12px;line-height:12px;color:#222;font-weight:700;">Operação</div><svg style="position:absolute;left:198.3px;top:7.600000000000023px;" width="11" height="10" viewBox="0 0 11 10"><path d="M0.9 0.8 H9.8 L5.35 5 z" fill="none" stroke="#444" stroke-width="1.25" stroke-linejoin="miter"/><path d="M5.35 5 V9.6" stroke="#444" stroke-width="1.5"/></svg><div class="t" style="left:214.2px;top:6.00px;font-size:13px;line-height:13px;color:#666;font-weight:400;-webkit-text-stroke:0.35px currentColor">Item</div><svg style="position:absolute;left:328.3px;top:7.600000000000023px;" width="11" height="10" viewBox="0 0 11 10"><path d="M0.9 0.8 H9.8 L5.35 5 z" fill="none" stroke="#444" stroke-width="1.25" stroke-linejoin="miter"/><path d="M5.35 5 V9.6" stroke="#444" stroke-width="1.5"/></svg><div class="t" style="left:344px;top:6.00px;font-size:13px;line-height:13px;color:#666;font-weight:400;-webkit-text-stroke:0.35px currentColor">Descrição</div><svg style="position:absolute;left:578.3px;top:7.600000000000023px;" width="11" height="10" viewBox="0 0 11 10"><path d="M0.9 0.8 H9.8 L5.35 5 z" fill="none" stroke="#444" stroke-width="1.25" stroke-linejoin="miter"/><path d="M5.35 5 V9.6" stroke="#444" stroke-width="1.5"/></svg><div class="t" style="left:594px;top:6.00px;font-size:13px;line-height:13px;color:#666;font-weight:400;-webkit-text-stroke:0.35px currentColor">Qt total prevista</div><svg style="position:absolute;left:718.3px;top:7.600000000000023px;" width="11" height="10" viewBox="0 0 11 10"><path d="M0.9 0.8 H9.8 L5.35 5 z" fill="none" stroke="#444" stroke-width="1.25" stroke-linejoin="miter"/><path d="M5.35 5 V9.6" stroke="#444" stroke-width="1.5"/></svg><div class="t" style="left:734px;top:6.00px;font-size:13px;line-height:13px;color:#666;font-weight:400;-webkit-text-stroke:0.35px currentColor">Qt baixada</div><svg style="position:absolute;left:828.3px;top:7.600000000000023px;" width="11" height="10" viewBox="0 0 11 10"><path d="M0.9 0.8 H9.8 L5.35 5 z" fill="none" stroke="#444" stroke-width="1.25" stroke-linejoin="miter"/><path d="M5.35 5 V9.6" stroke="#444" stroke-width="1.5"/></svg><div class="t" style="left:844px;top:6.00px;font-size:13px;line-height:13px;color:#666;font-weight:400;-webkit-text-stroke:0.35px currentColor">Qt a baixar</div><svg style="position:absolute;left:1103.3px;top:7.600000000000023px;" width="11" height="10" viewBox="0 0 11 10"><path d="M0.9 0.8 H9.8 L5.35 5 z" fill="none" stroke="#444" stroke-width="1.25" stroke-linejoin="miter"/><path d="M5.35 5 V9.6" stroke="#444" stroke-width="1.5"/></svg><div class="t" style="left:1119px;top:6.00px;font-size:13px;line-height:13px;color:#666;font-weight:400;-webkit-text-stroke:0.35px currentColor">Estoque disponível</div><svg style="position:absolute;left:997px;top:7.300000000000011px;" width="13" height="11.5" viewBox="0 0 13 11.5"><path d="M0 0 H13 L7.8 6 V11.5 L5.2 9.5 V6 z" fill="#3573b8"/></svg><div class="t" style="left:1014.2px;top:6.00px;font-size:13px;line-height:13px;color:#666;font-weight:400;-webkit-text-stroke:0.35px currentColor">Estado</div><svg style="position:absolute;left:96.5px;top:31.5px;" width="11" height="11" viewBox="0 0 11 11"><circle cx="4.2" cy="4.2" r="3.3" fill="none" stroke="#aaa" stroke-width="1.2"/><path d="M6.6 6.6 L9.8 9.8" stroke="#aaa" stroke-width="1.4"/></svg><svg style="position:absolute;left:196px;top:31.5px;" width="11" height="11" viewBox="0 0 11 11"><circle cx="4.2" cy="4.2" r="3.3" fill="none" stroke="#aaa" stroke-width="1.2"/><path d="M6.6 6.6 L9.8 9.8" stroke="#aaa" stroke-width="1.4"/></svg><svg style="position:absolute;left:326px;top:31.5px;" width="11" height="11" viewBox="0 0 11 11"><circle cx="4.2" cy="4.2" r="3.3" fill="none" stroke="#aaa" stroke-width="1.2"/><path d="M6.6 6.6 L9.8 9.8" stroke="#aaa" stroke-width="1.4"/></svg><svg style="position:absolute;left:576px;top:31.5px;" width="11" height="11" viewBox="0 0 11 11"><circle cx="4.2" cy="4.2" r="3.3" fill="none" stroke="#aaa" stroke-width="1.2"/><path d="M6.6 6.6 L9.8 9.8" stroke="#aaa" stroke-width="1.4"/></svg><svg style="position:absolute;left:716px;top:31.5px;" width="11" height="11" viewBox="0 0 11 11"><circle cx="4.2" cy="4.2" r="3.3" fill="none" stroke="#aaa" stroke-width="1.2"/><path d="M6.6 6.6 L9.8 9.8" stroke="#aaa" stroke-width="1.4"/></svg><svg style="position:absolute;left:826px;top:31.5px;" width="11" height="11" viewBox="0 0 11 11"><circle cx="4.2" cy="4.2" r="3.3" fill="none" stroke="#aaa" stroke-width="1.2"/><path d="M6.6 6.6 L9.8 9.8" stroke="#aaa" stroke-width="1.4"/></svg><svg style="position:absolute;left:1101.6px;top:31.5px;" width="11" height="11" viewBox="0 0 11 11"><circle cx="4.2" cy="4.2" r="3.3" fill="none" stroke="#aaa" stroke-width="1.2"/><path d="M6.6 6.6 L9.8 9.8" stroke="#aaa" stroke-width="1.4"/></svg><svg style="position:absolute;left:28px;top:52.5px;" width="14" height="14" viewBox="0 0 14 14"><path d="M1.6 12.3 L1.9 10 L9.9 2 L12 4.1 L4 12.1 z" fill="none" stroke="#666" stroke-width="1.3"/><path d="M9.2 2.7 L10.6 1.3 L12.7 3.4 L11.3 4.8 z" fill="#666"/></svg><svg style="position:absolute;left:49.5px;top:53.5px;" width="10" height="12" viewBox="0 0 10 12"><path d="M0.5 2.2 H9.5 M3.2 2.2 V0.8 H6.8 V2.2" fill="none" stroke="#555" stroke-width="1.1"/><path d="M1.6 3 V11 H8.4 V3" fill="none" stroke="#555" stroke-width="1.2"/><path d="M3.8 4.5 V9.5 M6.2 4.5 V9.5" stroke="#555" stroke-width="1"/></svg><div style="position:absolute;left:73.6px;top:55.0px;width:2.2px;height:2.2px;box-sizing:border-box;background:#555;border-radius:50%"></div><div style="position:absolute;left:73.6px;top:59.0px;width:2.2px;height:2.2px;box-sizing:border-box;background:#555;border-radius:50%"></div><div style="position:absolute;left:73.6px;top:63.0px;width:2.2px;height:2.2px;box-sizing:border-box;background:#555;border-radius:50%"></div><div class="t" style="left:96.4px;top:54.00px;font-size:12.5px;line-height:12.5px;color:#222;font-weight:400;">10</div><div class="t" style="left:196.1px;top:54.00px;font-size:12.5px;line-height:12.5px;color:#222;font-weight:400;">00053</div><div class="t" style="left:326px;top:53.00px;font-size:13px;line-height:13px;color:#222;font-weight:400;">Suporte ferro galvanizado</div><div class="t" style="left:102.5px;width:600px;text-align:right;top:54.00px;font-size:12.5px;line-height:12.5px;color:#222;font-weight:400;">4,00</div><div class="t" style="left:212.5px;width:600px;text-align:right;top:54.00px;font-size:12.5px;line-height:12.5px;color:#222;font-weight:400;">0,00</div><div style="position:absolute;left:825.2px;top:49.19999999999999px;width:94.3px;height:20.5px;box-sizing:border-box;background:#fff;border:1px solid #c8c8c8;border-radius:4px"></div><div class="t" style="left:313.5px;width:600px;text-align:right;top:54.00px;font-size:12.5px;line-height:12.5px;color:#222;font-weight:400;">4,00000</div><svg style="position:absolute;left:928.5px;top:54.0px;" width="10" height="11" viewBox="0 0 10 11"><path d="M5 0.5 V10 M1 6 L5 10 L9 6" fill="none" stroke="#5cb85c" stroke-width="1.5"/></svg><svg style="position:absolute;left:947px;top:52.5px;" width="14" height="14" viewBox="0 0 14 14"><path d="M12.2 5.2 A6 6 0 1 1 9.5 1.6" fill="none" stroke="#666" stroke-width="1.3"/><path d="M4 6.8 L6.4 9.2 L12 3.6" fill="none" stroke="#666" stroke-width="1.3"/></svg><div style="position:absolute;left:1028px;top:51.0px;width:57.7px;height:17px;box-sizing:border-box;background:#fbe8da;border-radius:4px"></div><div class="t" style="left:756.5px;width:600px;text-align:center;top:53.00px;font-size:13px;line-height:13px;color:#c0671c;font-weight:400;-webkit-text-stroke:0.35px currentColor">A baixar</div><div class="t" style="left:626px;width:600px;text-align:right;top:54.00px;font-size:12.5px;line-height:12.5px;color:#222;font-weight:400;">27</div><svg style="position:absolute;left:28px;top:76.5px;" width="14" height="14" viewBox="0 0 14 14"><path d="M1.6 12.3 L1.9 10 L9.9 2 L12 4.1 L4 12.1 z" fill="none" stroke="#666" stroke-width="1.3"/><path d="M9.2 2.7 L10.6 1.3 L12.7 3.4 L11.3 4.8 z" fill="#666"/></svg><svg style="position:absolute;left:49.5px;top:77.5px;" width="10" height="12" viewBox="0 0 10 12"><path d="M0.5 2.2 H9.5 M3.2 2.2 V0.8 H6.8 V2.2" fill="none" stroke="#555" stroke-width="1.1"/><path d="M1.6 3 V11 H8.4 V3" fill="none" stroke="#555" stroke-width="1.2"/><path d="M3.8 4.5 V9.5 M6.2 4.5 V9.5" stroke="#555" stroke-width="1"/></svg><div style="position:absolute;left:73.6px;top:79.0px;width:2.2px;height:2.2px;box-sizing:border-box;background:#555;border-radius:50%"></div><div style="position:absolute;left:73.6px;top:83.0px;width:2.2px;height:2.2px;box-sizing:border-box;background:#555;border-radius:50%"></div><div style="position:absolute;left:73.6px;top:87.0px;width:2.2px;height:2.2px;box-sizing:border-box;background:#555;border-radius:50%"></div><div class="t" style="left:96.4px;top:78.00px;font-size:12.5px;line-height:12.5px;color:#222;font-weight:400;">10</div><div class="t" style="left:196.1px;top:78.00px;font-size:12.5px;line-height:12.5px;color:#222;font-weight:400;">010085</div><div class="t" style="left:326px;top:77.00px;font-size:13px;line-height:13px;color:#222;font-weight:400;">Retificador</div><div class="t" style="left:102.5px;width:600px;text-align:right;top:78.00px;font-size:12.5px;line-height:12.5px;color:#222;font-weight:400;">4,00</div><div class="t" style="left:212.5px;width:600px;text-align:right;top:78.00px;font-size:12.5px;line-height:12.5px;color:#222;font-weight:400;">0,00</div><div style="position:absolute;left:825.2px;top:74px;width:94.3px;height:18.7px;box-sizing:border-box;background:#f4f4f4;border:1px solid #d9d9d9;border-radius:4px"></div><div class="t" style="left:313.5px;width:600px;text-align:right;top:78.00px;font-size:12.5px;line-height:12.5px;color:#c4c4c4;font-weight:400;">4,00000</div><svg style="position:absolute;left:928.5px;top:78.0px;" width="10" height="11" viewBox="0 0 10 11"><path d="M5 0.5 V10 M1 6 L5 10 L9 6" fill="none" stroke="#5cb85c" stroke-width="1.5"/></svg><svg style="position:absolute;left:947px;top:76.5px;" width="14" height="14" viewBox="0 0 14 14"><path d="M12.2 5.2 A6 6 0 1 1 9.5 1.6" fill="none" stroke="#666" stroke-width="1.3"/><path d="M4 6.8 L6.4 9.2 L12 3.6" fill="none" stroke="#666" stroke-width="1.3"/></svg><div style="position:absolute;left:1028px;top:75.0px;width:57.7px;height:17px;box-sizing:border-box;background:#f3e1d3;border-radius:4px"></div><div class="t" style="left:756.5px;width:600px;text-align:center;top:77.00px;font-size:13px;line-height:13px;color:#c0671c;font-weight:400;-webkit-text-stroke:0.35px currentColor">A baixar</div><div class="t" style="left:626px;width:600px;text-align:right;top:78.00px;font-size:12.5px;line-height:12.5px;color:#222;font-weight:400;">4</div><svg style="position:absolute;left:28px;top:99.5px;" width="14" height="14" viewBox="0 0 14 14"><path d="M1.6 12.3 L1.9 10 L9.9 2 L12 4.1 L4 12.1 z" fill="none" stroke="#666" stroke-width="1.3"/><path d="M9.2 2.7 L10.6 1.3 L12.7 3.4 L11.3 4.8 z" fill="#666"/></svg><svg style="position:absolute;left:49.5px;top:100.5px;" width="10" height="12" viewBox="0 0 10 12"><path d="M0.5 2.2 H9.5 M3.2 2.2 V0.8 H6.8 V2.2" fill="none" stroke="#555" stroke-width="1.1"/><path d="M1.6 3 V11 H8.4 V3" fill="none" stroke="#555" stroke-width="1.2"/><path d="M3.8 4.5 V9.5 M6.2 4.5 V9.5" stroke="#555" stroke-width="1"/></svg><div style="position:absolute;left:73.6px;top:102.0px;width:2.2px;height:2.2px;box-sizing:border-box;background:#555;border-radius:50%"></div><div style="position:absolute;left:73.6px;top:106.0px;width:2.2px;height:2.2px;box-sizing:border-box;background:#555;border-radius:50%"></div><div style="position:absolute;left:73.6px;top:110.0px;width:2.2px;height:2.2px;box-sizing:border-box;background:#555;border-radius:50%"></div><div class="t" style="left:96.4px;top:101.00px;font-size:12.5px;line-height:12.5px;color:#222;font-weight:400;">10</div><div class="t" style="left:196.1px;top:101.00px;font-size:12.5px;line-height:12.5px;color:#222;font-weight:400;">010086</div><div class="t" style="left:326px;top:100.00px;font-size:13px;line-height:13px;color:#222;font-weight:400;">Barramento CC</div><div class="t" style="left:102.5px;width:600px;text-align:right;top:101.00px;font-size:12.5px;line-height:12.5px;color:#222;font-weight:400;">12,00</div><div class="t" style="left:212.5px;width:600px;text-align:right;top:101.00px;font-size:12.5px;line-height:12.5px;color:#222;font-weight:400;">0,00</div><div style="position:absolute;left:825.2px;top:97px;width:94.3px;height:18.7px;box-sizing:border-box;background:#f4f4f4;border:1px solid #d9d9d9;border-radius:4px"></div><div class="t" style="left:313.5px;width:600px;text-align:right;top:101.00px;font-size:12.5px;line-height:12.5px;color:#c4c4c4;font-weight:400;">12,00000</div><svg style="position:absolute;left:928.5px;top:101.0px;" width="10" height="11" viewBox="0 0 10 11"><path d="M5 0.5 V10 M1 6 L5 10 L9 6" fill="none" stroke="#5cb85c" stroke-width="1.5"/></svg><svg style="position:absolute;left:947px;top:99.5px;" width="14" height="14" viewBox="0 0 14 14"><path d="M12.2 5.2 A6 6 0 1 1 9.5 1.6" fill="none" stroke="#666" stroke-width="1.3"/><path d="M4 6.8 L6.4 9.2 L12 3.6" fill="none" stroke="#666" stroke-width="1.3"/></svg><div style="position:absolute;left:1028px;top:98.0px;width:57.7px;height:17px;box-sizing:border-box;background:#fbe8da;border-radius:4px"></div><div class="t" style="left:756.5px;width:600px;text-align:center;top:100.00px;font-size:13px;line-height:13px;color:#c0671c;font-weight:400;-webkit-text-stroke:0.35px currentColor">A baixar</div><div class="t" style="left:626px;width:600px;text-align:right;top:101.00px;font-size:12.5px;line-height:12.5px;color:#222;font-weight:400;">38</div><svg style="position:absolute;left:28px;top:123.5px;" width="14" height="14" viewBox="0 0 14 14"><path d="M1.6 12.3 L1.9 10 L9.9 2 L12 4.1 L4 12.1 z" fill="none" stroke="#666" stroke-width="1.3"/><path d="M9.2 2.7 L10.6 1.3 L12.7 3.4 L11.3 4.8 z" fill="#666"/></svg><svg style="position:absolute;left:49.5px;top:124.5px;" width="10" height="12" viewBox="0 0 10 12"><path d="M0.5 2.2 H9.5 M3.2 2.2 V0.8 H6.8 V2.2" fill="none" stroke="#555" stroke-width="1.1"/><path d="M1.6 3 V11 H8.4 V3" fill="none" stroke="#555" stroke-width="1.2"/><path d="M3.8 4.5 V9.5 M6.2 4.5 V9.5" stroke="#555" stroke-width="1"/></svg><div style="position:absolute;left:73.6px;top:126.0px;width:2.2px;height:2.2px;box-sizing:border-box;background:#555;border-radius:50%"></div><div style="position:absolute;left:73.6px;top:130.0px;width:2.2px;height:2.2px;box-sizing:border-box;background:#555;border-radius:50%"></div><div style="position:absolute;left:73.6px;top:134.0px;width:2.2px;height:2.2px;box-sizing:border-box;background:#555;border-radius:50%"></div><div class="t" style="left:96.4px;top:125.00px;font-size:12.5px;line-height:12.5px;color:#222;font-weight:400;">10</div><div class="t" style="left:196.1px;top:125.00px;font-size:12.5px;line-height:12.5px;color:#222;font-weight:400;">010087</div><div class="t" style="left:326px;top:124.00px;font-size:13px;line-height:13px;color:#222;font-weight:400;">Circuito de controle</div><div class="t" style="left:102.5px;width:600px;text-align:right;top:125.00px;font-size:12.5px;line-height:12.5px;color:#222;font-weight:400;">4,00</div><div class="t" style="left:212.5px;width:600px;text-align:right;top:125.00px;font-size:12.5px;line-height:12.5px;color:#222;font-weight:400;">0,00</div><div style="position:absolute;left:825.2px;top:120px;width:94.3px;height:20.7px;box-sizing:border-box;background:#f4f4f4;border:1px solid #d9d9d9;border-radius:4px"></div><div class="t" style="left:313.5px;width:600px;text-align:right;top:125.00px;font-size:12.5px;line-height:12.5px;color:#c4c4c4;font-weight:400;">4,00000</div><svg style="position:absolute;left:928.5px;top:125.0px;" width="10" height="11" viewBox="0 0 10 11"><path d="M5 0.5 V10 M1 6 L5 10 L9 6" fill="none" stroke="#5cb85c" stroke-width="1.5"/></svg><svg style="position:absolute;left:947px;top:123.5px;" width="14" height="14" viewBox="0 0 14 14"><path d="M12.2 5.2 A6 6 0 1 1 9.5 1.6" fill="none" stroke="#666" stroke-width="1.3"/><path d="M4 6.8 L6.4 9.2 L12 3.6" fill="none" stroke="#666" stroke-width="1.3"/></svg><div style="position:absolute;left:1028px;top:122.0px;width:57.7px;height:17px;box-sizing:border-box;background:#f3e1d3;border-radius:4px"></div><div class="t" style="left:756.5px;width:600px;text-align:center;top:124.00px;font-size:13px;line-height:13px;color:#c0671c;font-weight:400;-webkit-text-stroke:0.35px currentColor">A baixar</div><div class="t" style="left:626px;width:600px;text-align:right;top:125.00px;font-size:12.5px;line-height:12.5px;color:#222;font-weight:400;">98</div><svg style="position:absolute;left:28px;top:147.5px;" width="14" height="14" viewBox="0 0 14 14"><path d="M1.6 12.3 L1.9 10 L9.9 2 L12 4.1 L4 12.1 z" fill="none" stroke="#666" stroke-width="1.3"/><path d="M9.2 2.7 L10.6 1.3 L12.7 3.4 L11.3 4.8 z" fill="#666"/></svg><svg style="position:absolute;left:49.5px;top:148.5px;" width="10" height="12" viewBox="0 0 10 12"><path d="M0.5 2.2 H9.5 M3.2 2.2 V0.8 H6.8 V2.2" fill="none" stroke="#555" stroke-width="1.1"/><path d="M1.6 3 V11 H8.4 V3" fill="none" stroke="#555" stroke-width="1.2"/><path d="M3.8 4.5 V9.5 M6.2 4.5 V9.5" stroke="#555" stroke-width="1"/></svg><div style="position:absolute;left:73.6px;top:150.0px;width:2.2px;height:2.2px;box-sizing:border-box;background:#555;border-radius:50%"></div><div style="position:absolute;left:73.6px;top:154.0px;width:2.2px;height:2.2px;box-sizing:border-box;background:#555;border-radius:50%"></div><div style="position:absolute;left:73.6px;top:158.0px;width:2.2px;height:2.2px;box-sizing:border-box;background:#555;border-radius:50%"></div><div class="t" style="left:96.4px;top:149.00px;font-size:12.5px;line-height:12.5px;color:#222;font-weight:400;">10</div><div class="t" style="left:196.1px;top:149.00px;font-size:12.5px;line-height:12.5px;color:#222;font-weight:400;">010088</div><div class="t" style="left:326px;top:148.00px;font-size:13px;line-height:13px;color:#222;font-weight:400;">Conectores</div><div class="t" style="left:102.5px;width:600px;text-align:right;top:149.00px;font-size:12.5px;line-height:12.5px;color:#222;font-weight:400;">4,00</div><div class="t" style="left:212.5px;width:600px;text-align:right;top:149.00px;font-size:12.5px;line-height:12.5px;color:#222;font-weight:400;">0,00</div><div style="position:absolute;left:825.2px;top:145.2px;width:94.3px;height:18.5px;box-sizing:border-box;background:#fff;border:1px solid #c8c8c8;border-radius:4px"></div><div class="t" style="left:313.5px;width:600px;text-align:right;top:149.00px;font-size:12.5px;line-height:12.5px;color:#222;font-weight:400;">4,00000</div><svg style="position:absolute;left:928.5px;top:149.0px;" width="10" height="11" viewBox="0 0 10 11"><path d="M5 0.5 V10 M1 6 L5 10 L9 6" fill="none" stroke="#5cb85c" stroke-width="1.5"/></svg><svg style="position:absolute;left:947px;top:147.5px;" width="14" height="14" viewBox="0 0 14 14"><path d="M12.2 5.2 A6 6 0 1 1 9.5 1.6" fill="none" stroke="#666" stroke-width="1.3"/><path d="M4 6.8 L6.4 9.2 L12 3.6" fill="none" stroke="#666" stroke-width="1.3"/></svg><div style="position:absolute;left:1028px;top:146.0px;width:57.7px;height:17px;box-sizing:border-box;background:#fbe8da;border-radius:4px"></div><div class="t" style="left:756.5px;width:600px;text-align:center;top:148.00px;font-size:13px;line-height:13px;color:#c0671c;font-weight:400;-webkit-text-stroke:0.35px currentColor">A baixar</div><div class="t" style="left:626px;width:600px;text-align:right;top:149.00px;font-size:12.5px;line-height:12.5px;color:#222;font-weight:400;">300</div><div style="position:absolute;left:0px;top:166.5px;width:660px;height:6.3px;box-sizing:border-box;background:#d3d8dd;border-radius:3px"></div></div><div style="position:absolute;left:831px;top:321px;width:108px;height:77.7px;box-sizing:border-box;border:3px solid #ff0000;border-radius:2px"></div><div style="position:absolute;left:5.199999999999999px;top:438px;width:1238px;height:26px;box-sizing:border-box;border:1px solid #ececec;border-radius:4px"></div><svg style="position:absolute;left:19px;top:449.5px;" width="8" height="5" viewBox="0 0 8 5"><path d="M1 0.8 L4 3.8 L7 0.8" fill="none" stroke="#222" stroke-width="1.7"/></svg><div class="t" style="left:41.4px;top:445.00px;font-size:13px;line-height:13px;color:#1d1d1d;font-weight:400;-webkit-text-stroke:0.45px currentColor">Reservas</div><div style="position:absolute;left:5.199999999999999px;top:469px;width:1238px;height:27px;box-sizing:border-box;background:#e2eef2;border:1px solid #ececec;border-radius:4px"></div><svg style="position:absolute;left:19px;top:480.5px;" width="8" height="5" viewBox="0 0 8 5"><path d="M1 0.8 L4 3.8 L7 0.8" fill="none" stroke="#222" stroke-width="1.7"/></svg><div class="t" style="left:41.4px;top:476.00px;font-size:13px;line-height:13px;color:#1d1d1d;font-weight:400;-webkit-text-stroke:0.45px currentColor">Projeções de uso</div><div style="position:absolute;left:5.199999999999999px;top:501px;width:1238px;height:27px;box-sizing:border-box;border:1px solid #ececec;border-top-color:#d6d6d6;border-radius:4px"></div><svg style="position:absolute;left:19px;top:512.5px;" width="8" height="5" viewBox="0 0 8 5"><path d="M1 0.8 L4 3.8 L7 0.8" fill="none" stroke="#222" stroke-width="1.7"/></svg><div class="t" style="left:41.4px;top:508.00px;font-size:13px;line-height:13px;color:#1d1d1d;font-weight:400;-webkit-text-stroke:0.45px currentColor">Aparas</div><div style="position:absolute;left:5.199999999999999px;top:533px;width:1238px;height:27px;box-sizing:border-box;border:1px solid #ececec;border-radius:4px"></div><svg style="position:absolute;left:19px;top:544.5px;" width="8" height="5" viewBox="0 0 8 5"><path d="M1 0.8 L4 3.8 L7 0.8" fill="none" stroke="#222" stroke-width="1.7"/></svg><div class="t" style="left:41.4px;top:540.00px;font-size:13px;line-height:13px;color:#1d1d1d;font-weight:400;-webkit-text-stroke:0.45px currentColor">Retirada de materiais</div><div style="position:absolute;left:5.199999999999999px;top:565px;width:1238px;height:26px;box-sizing:border-box;border:1px solid #ececec;border-radius:4px"></div><svg style="position:absolute;left:19px;top:576.5px;" width="8" height="5" viewBox="0 0 8 5"><path d="M1 0.8 L4 3.8 L7 0.8" fill="none" stroke="#222" stroke-width="1.7"/></svg><div class="t" style="left:41.4px;top:572.00px;font-size:13px;line-height:13px;color:#1d1d1d;font-weight:400;-webkit-text-stroke:0.45px currentColor">Conclusões</div><div style="position:absolute;left:5.199999999999999px;top:596px;width:1238px;height:27px;box-sizing:border-box;border:1px solid #ececec;border-radius:4px"></div><svg style="position:absolute;left:19px;top:607.5px;" width="8" height="5" viewBox="0 0 8 5"><path d="M1 0.8 L4 3.8 L7 0.8" fill="none" stroke="#222" stroke-width="1.7"/></svg><div class="t" style="left:41.4px;top:603.00px;font-size:13px;line-height:13px;color:#1d1d1d;font-weight:400;-webkit-text-stroke:0.45px currentColor">Custos de mão de obra</div><div style="position:absolute;left:5.199999999999999px;top:628px;width:1238px;height:27px;box-sizing:border-box;border:1px solid #ececec;border-radius:4px"></div><svg style="position:absolute;left:19px;top:639.5px;" width="8" height="5" viewBox="0 0 8 5"><path d="M1 0.8 L4 3.8 L7 0.8" fill="none" stroke="#222" stroke-width="1.7"/></svg><div class="t" style="left:41.4px;top:635.00px;font-size:13px;line-height:13px;color:#1d1d1d;font-weight:400;-webkit-text-stroke:0.45px currentColor">Outros dados</div><div style="position:absolute;left:5.199999999999999px;top:660px;width:1238px;height:26px;box-sizing:border-box;border:1px solid #ececec;border-radius:4px"></div><svg style="position:absolute;left:19px;top:671.5px;" width="8" height="5" viewBox="0 0 8 5"><path d="M1 0.8 L4 3.8 L7 0.8" fill="none" stroke="#222" stroke-width="1.7"/></svg><div class="t" style="left:41.4px;top:667.00px;font-size:13px;line-height:13px;color:#1d1d1d;font-weight:400;-webkit-text-stroke:0.45px currentColor">Campos adicionais</div><div style="position:absolute;left:5.199999999999999px;top:691px;width:1238px;height:27px;box-sizing:border-box;border:1px solid #ececec;border-radius:4px"></div><svg style="position:absolute;left:19px;top:702.5px;" width="8" height="5" viewBox="0 0 8 5"><path d="M1 0.8 L4 3.8 L7 0.8" fill="none" stroke="#222" stroke-width="1.7"/></svg><div class="t" style="left:41.4px;top:698.00px;font-size:13px;line-height:13px;color:#1d1d1d;font-weight:400;-webkit-text-stroke:0.45px currentColor">Anexos</div></div><div style="position:absolute;left:22px;top:789px;width:86.5px;height:23.5px;box-sizing:border-box;background:#5cb85c;border-radius:3px;box-shadow:0 1px 2px rgba(0,0,0,0.15)"></div><svg style="position:absolute;left:30px;top:794px;" width="13" height="12" viewBox="0 0 13 12"><path d="M1 6.5 L4.8 10.2 L12 2.5" fill="none" stroke="#fff" stroke-width="1.8"/></svg><div class="t" style="left:50.2px;top:794.00px;font-size:13px;line-height:13px;color:#fff;font-weight:700;">Concluir</div><div style="position:absolute;left:114px;top:789px;width:91.5px;height:23.5px;box-sizing:border-box;background:#5cb85c;border-radius:3px;box-shadow:0 1px 2px rgba(0,0,0,0.15)"></div><div style="position:absolute;left:186.8px;top:789px;width:1px;height:23.5px;box-sizing:border-box;background:#fff"></div><svg style="position:absolute;left:122px;top:794.5px;" width="12" height="12" viewBox="0 0 12 12"><path d="M1 1 H9 L11.5 3.5 V11.5 H1 z" fill="#fff"/><rect x="3" y="1.8" width="5.5" height="3" fill="#5cb85c"/><circle cx="6.2" cy="8" r="1.7" fill="#5cb85c"/></svg><div class="t" style="left:141.5px;top:794.00px;font-size:13px;line-height:13px;color:#fff;font-weight:700;">Salvar</div><svg style="position:absolute;left:193.5px;top:799.5px;" width="6.4" height="3.3" viewBox="0 0 6.4 3.3"><path d="M0 0 L6.4 0 L3.2 3.3 z" fill="#fff"/></svg><div style="position:absolute;left:211px;top:789px;width:86.5px;height:23.5px;box-sizing:border-box;background:#fff;border-radius:3px;box-shadow:0 0 3px rgba(0,0,0,0.18)"></div><svg style="position:absolute;left:219.5px;top:794.5px;" width="14" height="12" viewBox="0 0 14 12"><rect x="3.2" y="0.5" width="7.6" height="3" fill="#222"/><rect x="0.5" y="3.8" width="13" height="5.8" rx="1" fill="#222"/><rect x="3.2" y="7" width="7.6" height="4.5" fill="#fff" stroke="#222" stroke-width="1.2"/></svg><div class="t" style="left:239.5px;top:794.00px;font-size:13.5px;line-height:13.5px;color:#222;font-weight:400;-webkit-text-stroke:0.35px currentColor">Imprimir</div><div style="position:absolute;left:303px;top:789px;width:90px;height:23.5px;box-sizing:border-box;background:#fff;border-radius:3px;box-shadow:0 0 3px rgba(0,0,0,0.18)"></div><svg style="position:absolute;left:314.5px;top:796px;" width="10" height="10" viewBox="0 0 10 10"><path d="M0.8 0.8 L9.2 9.2 M9.2 0.8 L0.8 9.2" stroke="#222" stroke-width="1.4"/></svg><div class="t" style="left:332px;top:794.00px;font-size:13.5px;line-height:13.5px;color:#222;font-weight:400;-webkit-text-stroke:0.35px currentColor">Cancelar</div><div class="t" style="left:656px;width:600px;text-align:right;top:788.00px;font-size:11px;line-height:11px;color:#777;font-weight:400;letter-spacing:-0.25px">Criado em 24/07/2025 10:15:51 por Samuel Gonçalves do Nascimento (MAXIPROD).</div><div class="t" style="left:656px;width:600px;text-align:right;top:802.00px;font-size:11px;line-height:11px;color:#777;font-weight:400;letter-spacing:-0.25px">Alterado em 24/07/2025 10:15:52 por Samuel Gonçalves do Nascimento (MAXIPROD).</div>
</body></html>
